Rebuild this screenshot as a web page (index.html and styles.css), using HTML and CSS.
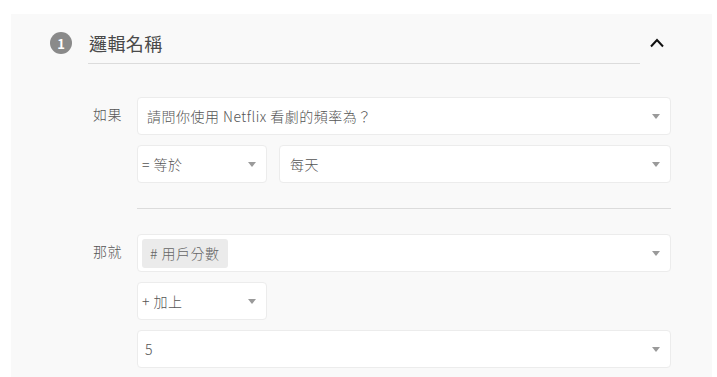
FILE: index.html
```html
<!DOCTYPE html>
<html lang="zh-Hant">
<head>
    <meta charset="UTF-8">
    <meta name="viewport" content="width=device-width, initial-scale=1.0">
    <title>邏輯名稱</title>
    <link rel="stylesheet" href="styles.css">
</head>
<body>
    <div class="panel">
        <div class="panel-head">
            <span class="step-badge">1</span>
            <div class="panel-title">邏輯名稱</div>
            <svg class="collapse-btn" width="14" height="14" viewBox="0 0 14 14">
                <polyline points="1,10.5 7,4 13,10.5" fill="none" stroke="#111" stroke-width="2"/>
            </svg>
        </div>

        <div class="rule-body">
            <div class="cond-group">
                <div class="cond-label">如果</div>
                <div class="fields">
                    <div class="select">
                        <span class="value">請問你使用 Netflix 看劇的頻率為？</span>
                        <span class="caret"></span>
                    </div>
                    <div class="pair">
                        <div class="select compact">
                            <span class="value">= 等於</span>
                            <span class="caret"></span>
                        </div>
                        <div class="select wide">
                            <span class="value">每天</span>
                            <span class="caret"></span>
                        </div>
                    </div>
                </div>
            </div>

            <div class="divider"></div>

            <div class="cond-group">
                <div class="cond-label">那就</div>
                <div class="fields">
                    <div class="select tagged">
                        <span class="value"><span class="tag"># 用戶分數</span></span>
                        <span class="caret"></span>
                    </div>
                    <div class="pair">
                        <div class="select compact">
                            <span class="value">+ 加上</span>
                            <span class="caret"></span>
                        </div>
                    </div>
                    <div class="select number">
                        <span class="value">5</span>
                        <span class="caret"></span>
                    </div>
                </div>
            </div>
        </div>
    </div>
</body>
</html>
```

FILE: styles.css
```css
body {
    margin: 0;
    background-color: #fff;
    font-family: "Noto Sans CJK TC", "Noto Sans", sans-serif;
    font-weight: 300;
    color: #555;
}
.panel {
    margin: 14px 5px 0 11px;
    background-color: #f9f9f9;
    padding: 16px 0 40px 39px;
}
.panel-head {
    display: flex;
    align-items: flex-start;
}
.step-badge {
    width: 22px;
    height: 22px;
    margin-top: 2px;
    margin-right: 16px;
    border-radius: 50%;
    background-color: #8a8a8a;
    color: #fff;
    font-size: 13px;
    font-weight: 700;
    display: flex;
    align-items: center;
    justify-content: center;
}
.panel-title {
    flex: 1;
    font-size: 18px;
    line-height: 26px;
    letter-spacing: 0.4px;
    padding-left: 1px;
    padding-bottom: 7px;
    border-bottom: 1px solid #dcdcdc;
    color: #4a4a4a;
    font-weight: 400;
}
.collapse-btn {
    margin: 6px 48px 0 10px;
}
.rule-body {
    margin: 33px 41px 0 0;
}
.cond-group {
    display: grid;
    grid-template-columns: 87px 1fr;
}
.cond-label {
    text-align: right;
    padding-right: 15px;
    font-size: 14px;
    line-height: 34px;
    letter-spacing: 0.5px;
    color: #555;
}
.fields {
    display: flex;
    flex-direction: column;
    gap: 10px;
}
.pair {
    display: grid;
    grid-template-columns: 130px 1fr;
    gap: 12px;
}
.select {
    height: 38px;
    box-sizing: border-box;
    background-color: #fff;
    border: 1px solid #ececec;
    border-radius: 4px;
    display: flex;
    align-items: center;
    padding: 0 10px 0 9px;
    font-size: 14px;
    letter-spacing: 0.5px;
    color: #555;
}
.select .value {
    flex: 1;
    white-space: nowrap;
}
.select.compact {
    padding-left: 4px;
}
.select.wide {
    padding-left: 10px;
}
.select.number {
    padding-left: 7px;
}
.select.tagged {
    padding-left: 4px;
}
.caret {
    width: 0;
    height: 0;
    border-left: 4px solid transparent;
    border-right: 4px solid transparent;
    border-top: 5px solid #9a9a9a;
}
.tag {
    display: inline-block;
    background-color: #ebebeb;
    border-radius: 3px;
    padding: 0 8px;
    line-height: 29px;
    color: #666;
}
.divider {
    margin: 25px 0 25px 87px;
    border-top: 1px solid #dcdcdc;
}
```
